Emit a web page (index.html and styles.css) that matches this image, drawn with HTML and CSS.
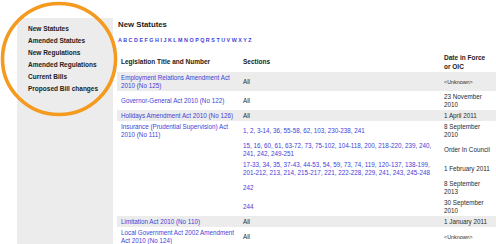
FILE: index.html
```html
<!DOCTYPE html>
<html>

<head>
    <meta name="viewport" content="width=device-width, initial-scale=1.0">
    <link rel="stylesheet" href="styles.css">
</head>

<body>
    <svg class="highlight" width="124" height="122" viewBox="0 0 124 122">
        <ellipse cx="59" cy="59" rx="56.5" ry="55.5" fill="none" stroke="#f49a1f" stroke-width="3.6" />
    </svg>

    <div class="page">
        <div class="sidebar">
            <a class="side-link" href="#">New Statutes</a>
            <a class="side-link" href="#">Amended Statutes</a>
            <a class="side-link" href="#">New Regulations</a>
            <a class="side-link" href="#">Amended Regulations</a>
            <a class="side-link" href="#">Current Bills</a>
            <a class="side-link" href="#">Proposed Bill changes</a>
        </div>

        <div class="main">
            <h1>New Statutes</h1>
            <div class="alphabet">
                <a href="#">A</a> <a href="#">B</a> <a href="#">C</a> <a href="#">D</a> <a href="#">E</a>
                <a href="#">F</a> <a href="#">G</a> <a href="#">H</a> <a href="#">I</a> <a href="#">J</a>
                <a href="#">K</a> <a href="#">L</a> <a href="#">M</a> <a href="#">N</a> <a href="#">O</a>
                <a href="#">P</a> <a href="#">Q</a> <a href="#">R</a> <a href="#">S</a> <a href="#">T</a>
                <a href="#">U</a> <a href="#">V</a> <a href="#">W</a> <a href="#">X</a> <a href="#">Y</a>
                <a href="#">Z</a>
            </div>

            <table class="statutes">
                <colgroup>
                    <col class="col-title">
                    <col class="col-sections">
                    <col class="col-date">
                </colgroup>
                <tr class="head">
                    <th>Legislation Title and Number</th>
                    <th>Sections</th>
                    <th>Date in Force or OIC</th>
                </tr>
                <tr class="alt">
                    <td><a href="#">Employment Relations Amendment Act 2010 (No 125)</a></td>
                    <td>All</td>
                    <td class="small">&lt;Unknown&gt;</td>
                </tr>
                <tr>
                    <td><a href="#">Governor-General Act 2010 (No 122)</a></td>
                    <td>All</td>
                    <td>23 November 2010</td>
                </tr>
                <tr class="alt">
                    <td><a href="#">Holidays Amendment Act 2010 (No 126)</a></td>
                    <td>All</td>
                    <td>1 April 2011</td>
                </tr>
                <tr>
                    <td><a href="#">Insurance (Prudential Supervision) Act 2010 (No 111)</a></td>
                    <td><a href="#">1, 2, 3-14, 36, 55-58, 62, 103, 230-238, 241</a></td>
                    <td>8 September 2010</td>
                </tr>
                <tr>
                    <td></td>
                    <td><a href="#">15, 16, 60, 61, 63-72, 73, 75-102, 104-118, 200, 218-220, 239, 240, 241, 242, 249-251</a></td>
                    <td>Order In Council</td>
                </tr>
                <tr>
                    <td></td>
                    <td><a href="#">17-33, 34, 35, 37-43, 44-53, 54, 59, 73, 74, 119, 120-137, 138-199, 201-212, 213, 214, 215-217, 221, 222-228, 229, 241, 243, 245-248</a></td>
                    <td>1 February 2011</td>
                </tr>
                <tr>
                    <td></td>
                    <td><a href="#">242</a></td>
                    <td>8 September 2013</td>
                </tr>
                <tr>
                    <td></td>
                    <td><a href="#">244</a></td>
                    <td>30 September 2010</td>
                </tr>
                <tr class="alt">
                    <td><a href="#">Limitation Act 2010 (No 110)</a></td>
                    <td>All</td>
                    <td>1 January 2011</td>
                </tr>
                <tr>
                    <td><a href="#">Local Government Act 2002 Amendment Act 2010 (No 124)</a></td>
                    <td>All</td>
                    <td class="small">&lt;Unknown&gt;</td>
                </tr>
            </table>
        </div>
    </div>
</body>

</html>
```

FILE: styles.css
```css
* {
    box-sizing: border-box;
}

body {
    margin: 0;
    padding: 0;
    background: #fff;
    color: #2a2a2a;
    font-family: 'Liberation Sans', Arial, sans-serif;
    overflow: hidden;
}

a {
    color: #3f3fd8;
    text-decoration: none;
}

.highlight {
    position: absolute;
    top: 0;
    left: 0;
    z-index: 2;
    pointer-events: none;
}

.page {
    display: flex;
    align-items: flex-start;
}

.sidebar {
    width: 96px;
    height: 226px;
    margin: 18px 4px 0 17px;
    padding: 5px 0 0 11px;
    background: #ececec;
    display: flex;
    flex-direction: column;
}

.side-link {
    color: #222;
    font-weight: bold;
    font-size: 6.5px;
    line-height: 12px;
}

.main {
    flex: 1;
    padding-top: 20px;
}

h1 {
    margin: 0 0 0 1px;
    font-size: 7.8px;
    line-height: 10px;
    font-weight: bold;
    color: #222;
}

.alphabet {
    margin: 6px 0 0 1px;
    font-size: 5.4px;
    line-height: 8px;
    font-weight: bold;
}

.statutes {
    margin-top: 7px;
    width: 379px;
    table-layout: fixed;
    border-collapse: collapse;
    font-size: 6.3px;
    line-height: 8px;
}

.col-title {
    width: 122px;
}

.col-sections {
    width: 201px;
}

.col-date {
    width: 56px;
}

.statutes th,
.statutes td {
    padding: 1.5px 2px 1.5px 4px;
    text-align: left;
    vertical-align: middle;
}

.statutes td:last-child,
.statutes th:last-child {
    padding-right: 4px;
}

.statutes th {
    font-size: 6.5px;
    line-height: 9px;
    font-weight: bold;
    color: #222;
}

.statutes tr.alt td {
    background: #ececec;
}

.statutes td.small {
    font-size: 5.4px;
}
```
